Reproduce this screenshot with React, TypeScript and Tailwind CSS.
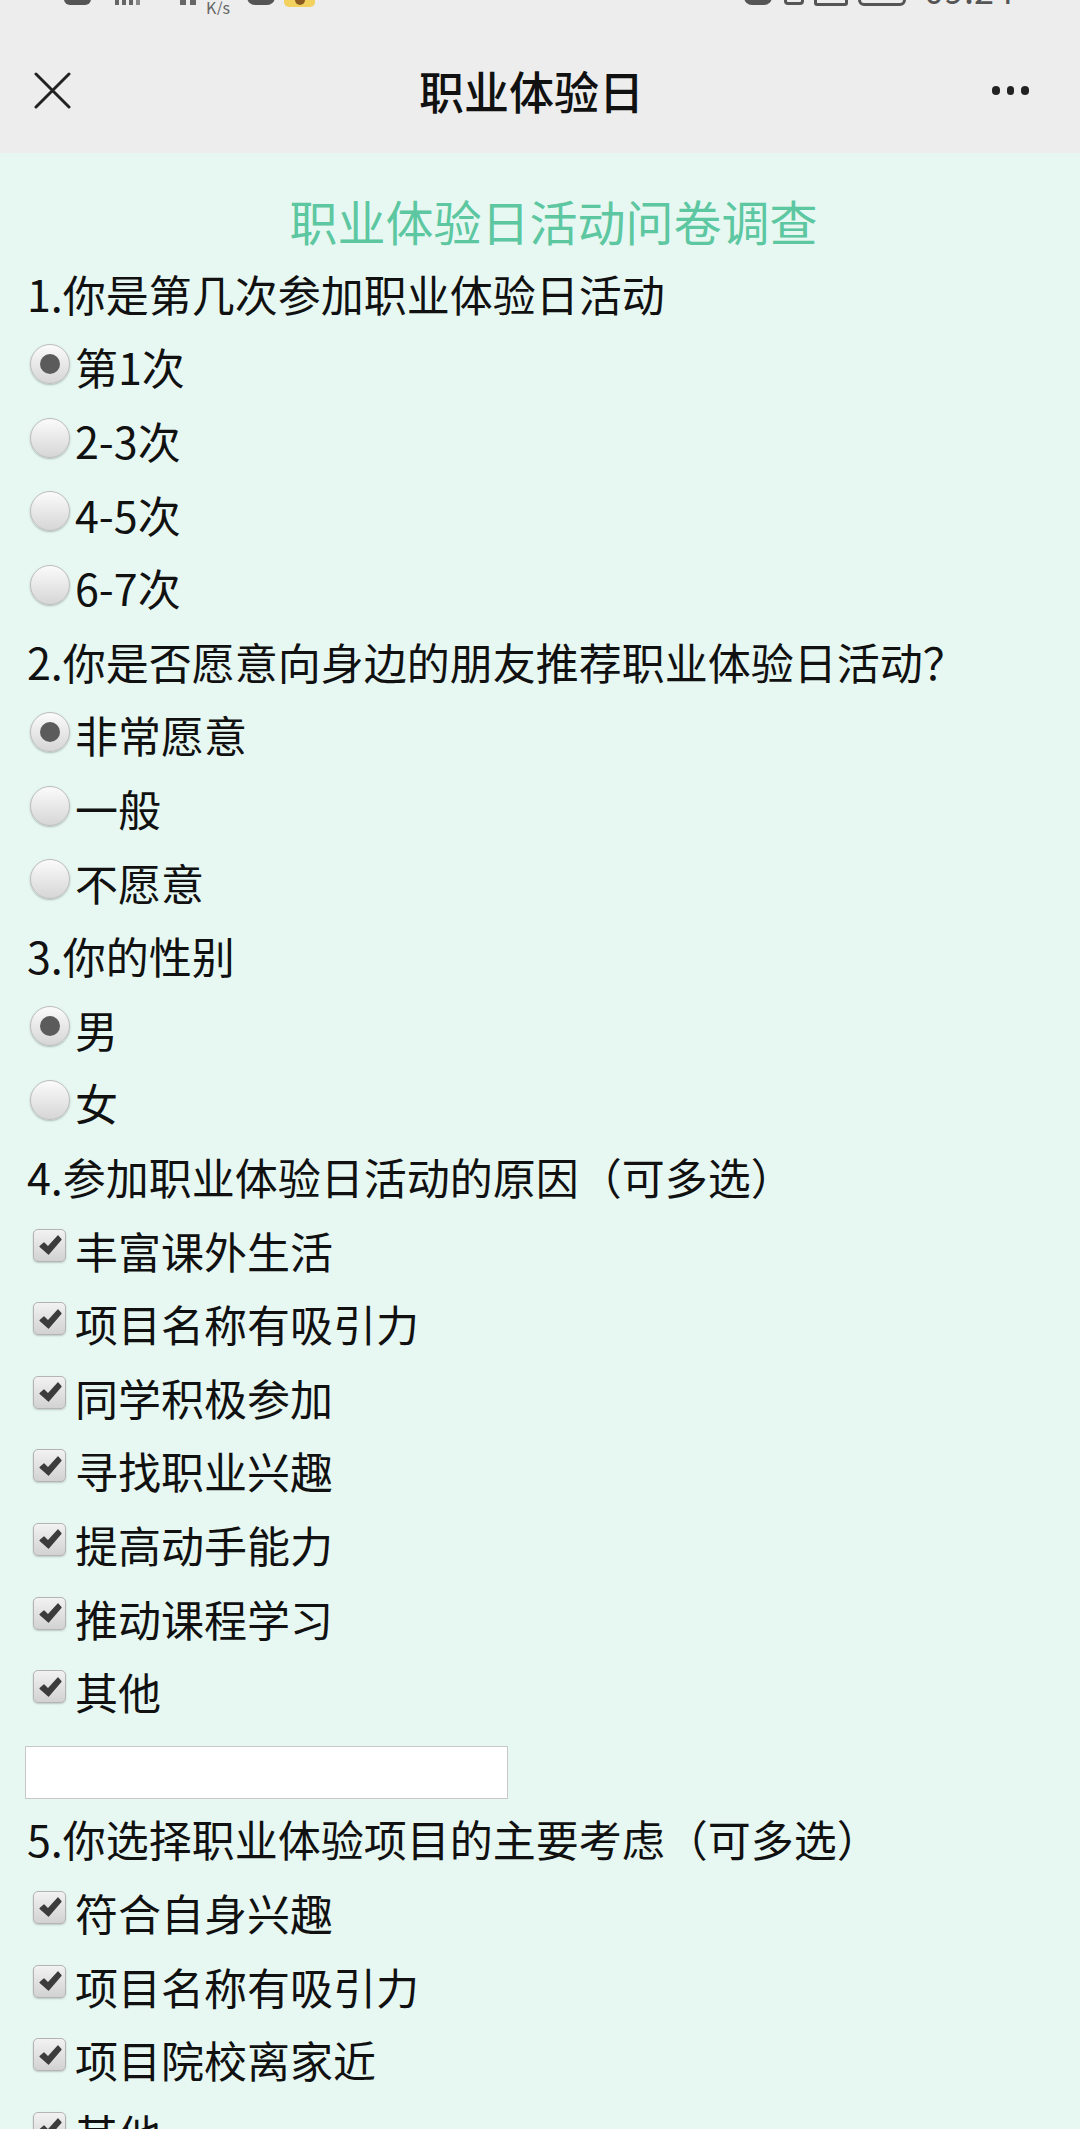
import React from "react";

const FONT = { fontFamily: '"Noto Sans CJK SC", "Noto Sans", sans-serif' };

function Radio({ checked }: { checked?: boolean }) {
  return (
    <div className="w-[40px] h-[40px] shrink-0 rounded-full border border-[#bdbdbd] bg-linear-to-b from-[#fbfbfb] to-[#d6d6d6] shadow-[0_1px_2px_rgba(0,0,0,0.25)] flex items-center justify-center mb-[6px]">
      {checked && <div className="w-[20px] h-[20px] rounded-full bg-[#5b5b5b]" />}
    </div>
  );
}

function Check() {
  return (
    <div className="w-[33px] h-[33px] shrink-0 ml-[6px] rounded-[5px] border border-[#b4b4b4] bg-linear-to-b from-[#f2f2f2] to-[#d2d2d2] shadow-[0_1px_2px_rgba(0,0,0,0.2)] flex items-center justify-center mb-[10px]">
      <svg width="24" height="22" viewBox="0 0 24 22">
        <path
          d="M2 12.5 L6 9 L10 13 L20 2 L23 5.5 L10.5 20 Z"
          fill="#3c3c3c"
          strokeLinejoin="round"
          stroke="#3c3c3c"
          strokeWidth="1.2"
        />
      </svg>
    </div>
  );
}

function Question({ text }: { text: string }) {
  return <div className="h-[73.6px] flex items-center text-[43px] leading-none text-[#111] whitespace-nowrap">{text}</div>;
}

function RadioRow({ label, checked }: { label: string; checked?: boolean }) {
  return (
    <div className="h-[73.6px] flex items-center pl-[3px]">
      <Radio checked={checked} />
      <span className="ml-[5px] text-[43px] leading-none text-[#111]">{label}</span>
    </div>
  );
}

function CheckRow({ label }: { label: string }) {
  return (
    <div className="h-[73.6px] flex items-center">
      <Check />
      <span className="ml-[9px] text-[43px] leading-none text-[#111]">{label}</span>
    </div>
  );
}

export default function App() {
  return (
    <div className="w-[1080px] h-[2129px] overflow-hidden bg-[#e7f8f2]" style={FONT}>
      <header className="h-[153px] bg-[#ededed] flex flex-col">
        <div className="h-[27px]">
          <div className="h-[15px] overflow-hidden flex items-end">
            <div className="ml-[64px] w-[27px] h-[22px] rounded-[6px] bg-[#555] mb-[10px]" />
            <div className="ml-[24px] flex items-end gap-[3px] mb-[10px]">
              <div className="w-[4px] h-[10px] bg-[#666]" />
              <div className="w-[4px] h-[14px] bg-[#666]" />
              <div className="w-[4px] h-[18px] bg-[#666]" />
              <div className="w-[4px] h-[22px] bg-[#888]" />
            </div>
            <div className="ml-[40px] flex gap-[4px] mb-[10px]">
              <div className="w-[6px] h-[18px] bg-[#666]" />
              <div className="w-[6px] h-[18px] bg-[#666]" />
            </div>
            <span className="ml-[10px] text-[16px] leading-none text-[#666] mb-[0px]">K/s</span>
            <div className="ml-[17px] w-[28px] h-[22px] rounded-[8px] bg-[#555] mb-[10px]" />
            <div className="ml-[9px] w-[31px] h-[26px] rounded-[5px] bg-[#f3d15e] mb-[8px] flex items-end justify-center">
              <div className="w-[10px] h-[6px] rounded-b-full bg-[#8a5a20] mb-[2px]" />
            </div>
            <div className="ml-auto flex items-end mr-[66px]">
              <div className="w-[28px] h-[20px] rounded-[8px] bg-[#555] mb-[10px]" />
              <div className="ml-[12px] w-[20px] h-[20px] border-[3px] border-[#555] rounded-[4px] mb-[10px]" />
              <div className="ml-[10px] w-[34px] h-[20px] border-[3px] border-[#555] rounded-[3px] mb-[9px]" />
              <div className="ml-[10px] w-[48px] h-[24px] border-[3px] border-[#555] rounded-[6px] mb-[9px]" />
              <span className="ml-[18px] text-[36px] leading-none text-[#555] mb-[9px]">09:24</span>
            </div>
          </div>
        </div>
        <div className="flex-1 flex items-center justify-between pl-[34px] pr-[51px]">
          <svg width="37" height="37" viewBox="0 0 37 37" className="shrink-0">
            <path d="M2 2 L35 35 M35 2 L2 35" stroke="#222" strokeWidth="3" strokeLinecap="round" />
          </svg>
          <div className="text-[45px] leading-none font-medium text-[#111]">职业体验日</div>
          <div className="flex gap-[7px] w-[37px] justify-end">
            <div className="w-[9px] h-[9px] rounded-full bg-[#222]" />
            <div className="w-[9px] h-[9px] rounded-full bg-[#222]" />
            <div className="w-[9px] h-[9px] rounded-full bg-[#222]" />
          </div>
        </div>
      </header>
      <main className="pt-[30px] pl-[27px]">
        <div className="h-[73.6px] flex items-center justify-center text-[48px] leading-none text-[#5cc7a0]">
          职业体验日活动问卷调查
        </div>
        <Question text="1.你是第几次参加职业体验日活动" />
        <RadioRow label="第1次" checked />
        <RadioRow label="2-3次" />
        <RadioRow label="4-5次" />
        <RadioRow label="6-7次" />
        <Question text="2.你是否愿意向身边的朋友推荐职业体验日活动？" />
        <RadioRow label="非常愿意" checked />
        <RadioRow label="一般" />
        <RadioRow label="不愿意" />
        <Question text="3.你的性别" />
        <RadioRow label="男" checked />
        <RadioRow label="女" />
        <Question text="4.参加职业体验日活动的原因（可多选）" />
        <CheckRow label="丰富课外生活" />
        <CheckRow label="项目名称有吸引力" />
        <CheckRow label="同学积极参加" />
        <CheckRow label="寻找职业兴趣" />
        <CheckRow label="提高动手能力" />
        <CheckRow label="推动课程学习" />
        <CheckRow label="其他" />
        <div className="h-[73.6px] flex items-end pb-[3px]">
          <div className="w-[483px] h-[53px] -ml-[2px] bg-white border border-[#c8c8c8]" />
        </div>
        <Question text="5.你选择职业体验项目的主要考虑（可多选）" />
        <CheckRow label="符合自身兴趣" />
        <CheckRow label="项目名称有吸引力" />
        <CheckRow label="项目院校离家近" />
        <CheckRow label="其他" />
      </main>
    </div>
  );
}
